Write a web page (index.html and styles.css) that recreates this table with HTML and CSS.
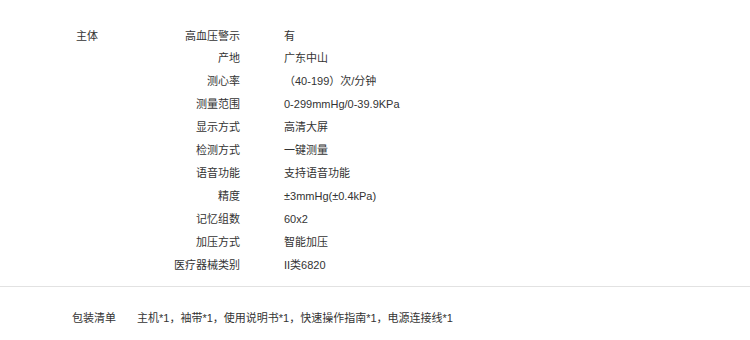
FILE: index.html
```html
<!DOCTYPE html>
<html lang="zh-CN">
<head>
<meta charset="utf-8">
<title>规格与包装</title>
<link rel="stylesheet" href="styles.css">
</head>
<body>
<div class="ptable">
  <div class="group">
    <h3 class="group-title">主体</h3>
    <dl class="spec">
      <dt>高血压警示</dt><dd>有</dd>
      <dt>产地</dt><dd>广东中山</dd>
      <dt>测心率</dt><dd>（40-199）次/分钟</dd>
      <dt>测量范围</dt><dd>0-299mmHg/0-39.9KPa</dd>
      <dt>显示方式</dt><dd>高清大屏</dd>
      <dt>检测方式</dt><dd>一键测量</dd>
      <dt>语音功能</dt><dd>支持语音功能</dd>
      <dt>精度</dt><dd>±3mmHg(±0.4kPa)</dd>
      <dt>记忆组数</dt><dd>60x2</dd>
      <dt>加压方式</dt><dd>智能加压</dd>
      <dt>医疗器械类别</dt><dd>II类6820</dd>
    </dl>
  </div>
</div>
<div class="package">
  <h3 class="package-title">包装清单</h3>
  <p class="package-list">主机*1，袖带*1，使用说明书*1，快速操作指南*1，电源连接线*1</p>
</div>
</body>
</html>
```
FILE: styles.css
```css
html, body {
  margin: 0;
  padding: 0;
  background: #fff;
}
body {
  font-family: "Liberation Sans", "Noto Sans CJK SC", sans-serif;
  font-size: 11px;
  color: #333;
  line-height: 22.9px;
}
.ptable {
  padding: 24.5px 0 9.5px 76px;
  border-bottom: 1px solid #e2e2e2;
}
.group {
  display: flex;
  align-items: flex-start;
}
.group-title {
  margin: 0;
  width: 84px;
  font-size: 11px;
  font-weight: normal;
}
.spec {
  margin: 0;
  display: grid;
  grid-template-columns: 80px auto;
  column-gap: 44px;
}
.spec dt {
  text-align: right;
}
.spec dd {
  margin: 0;
}
.package {
  display: flex;
  padding: 20px 0 0 72px;
}
.package-title {
  margin: 0;
  width: 65px;
  font-size: 11px;
  font-weight: normal;
}
.package-list {
  margin: 0;
}
```
